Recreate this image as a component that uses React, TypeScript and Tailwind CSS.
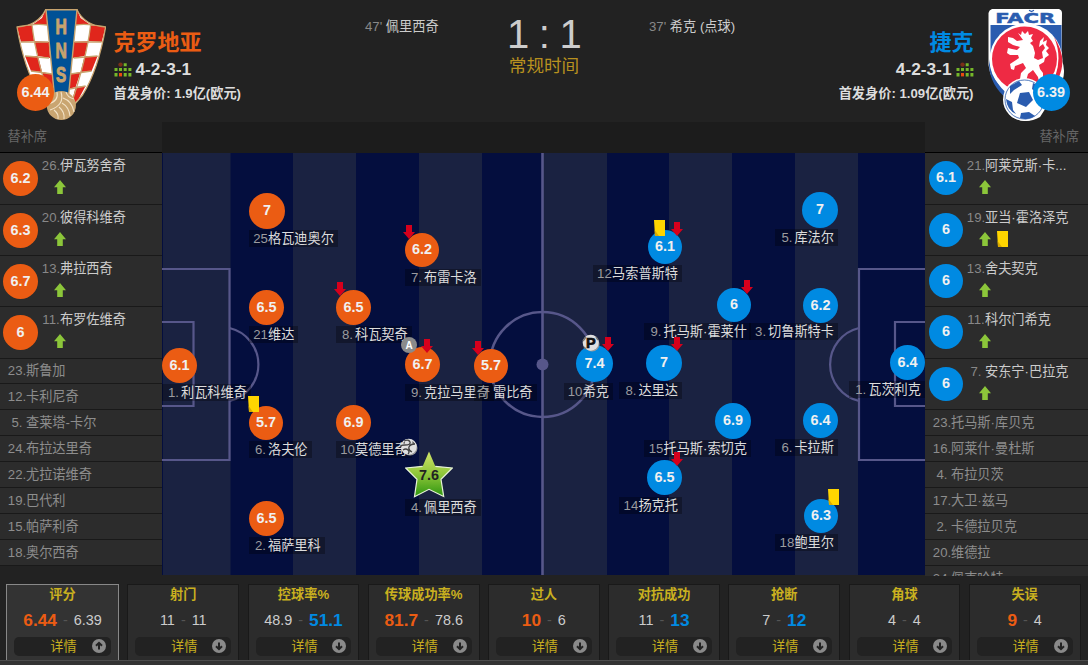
import React from 'react';
import clsx from 'clsx';

type Side = 'home' | 'away';

interface PitchPlayer {
  no: string;
  name: string;
  rating: string;
  // edge is the left side of a home marker and the right side of an away one
  edge: number;
  top: number;
  size: number;
  labelTop: number;
  side: Side;
  star?: boolean;
}

interface Sub {
  no: string;
  name: string;
  rating: string;
  yellow?: boolean;
}

const homePlayers: PitchPlayer[] = [
  { no: '1.', name: '利瓦科维奇', rating: '6.1', edge: 0, top: 195, size: 35, labelTop: 231, side: 'home' },
  { no: '25', name: '格瓦迪奥尔', rating: '7', edge: 87, top: 40, size: 36, labelTop: 77, side: 'home' },
  { no: '21', name: '维达', rating: '6.5', edge: 87, top: 137, size: 35, labelTop: 173, side: 'home' },
  { no: '6.', name: '洛夫伦', rating: '5.7', edge: 87, top: 253, size: 34, labelTop: 288, side: 'home' },
  { no: '2.', name: '福萨里科', rating: '6.5', edge: 87, top: 348, size: 35, labelTop: 384, side: 'home' },
  { no: '8.', name: '科瓦契奇', rating: '6.5', edge: 174, top: 137, size: 35, labelTop: 173, side: 'home' },
  { no: '10', name: '莫德里奇', rating: '6.9', edge: 174, top: 252, size: 35, labelTop: 288, side: 'home' },
  { no: '7.', name: '布雷卡洛', rating: '6.2', edge: 243, top: 80, size: 34, labelTop: 116, side: 'home' },
  { no: '9.', name: '克拉马里奇', rating: '6.7', edge: 243, top: 194, size: 35, labelTop: 231, side: 'home' },
  { no: '4.', name: '佩里西奇', rating: '7.6', edge: 243, top: 298, size: 48, labelTop: 346, side: 'home', star: true },
  { no: '7', name: '雷比奇', rating: '5.7', edge: 312, top: 196, size: 34, labelTop: 231, side: 'home' },
];

const awayPlayers: PitchPlayer[] = [
  { no: '12.', name: '马索普斯特', rating: '6.1', edge: 520, top: 77, size: 34, labelTop: 112, side: 'away' },
  { no: '10', name: '希克', rating: '7.4', edge: 451, top: 192, size: 37, labelTop: 230, side: 'away' },
  { no: '8.', name: '达里达', rating: '7', edge: 520, top: 192, size: 36, labelTop: 229, side: 'away' },
  { no: '14', name: '扬克托', rating: '6.5', edge: 520, top: 307, size: 35, labelTop: 344, side: 'away' },
  { no: '9.', name: '托马斯·霍莱什', rating: '6', edge: 589, top: 135, size: 34, labelTop: 170, side: 'away' },
  { no: '15', name: '托马斯·索切克', rating: '6.9', edge: 589, top: 250, size: 36, labelTop: 287, side: 'away' },
  { no: '5.', name: '库法尔', rating: '7', edge: 676, top: 39, size: 36, labelTop: 76, side: 'away' },
  { no: '3.', name: '切鲁斯特卡', rating: '6.2', edge: 676, top: 135, size: 35, labelTop: 170, side: 'away' },
  { no: '6.', name: '卡拉斯', rating: '6.4', edge: 676, top: 250, size: 35, labelTop: 286, side: 'away' },
  { no: '18', name: '鲍里尔', rating: '6.3', edge: 676, top: 346, size: 34, labelTop: 381, side: 'away' },
  { no: '1.', name: '瓦茨利克', rating: '6.4', edge: 763, top: 192, size: 35, labelTop: 228, side: 'away' },
];

const subsOut = [[241, 72], [172, 129], [259, 186], [310, 188], [509, 69], [440, 184], [509, 184], [509, 299], [579, 127]];
const yellowCards = [[86, 243], [492, 67], [666, 336]];

const homeSubs: Sub[] = [
  { no: '26.', name: '伊瓦努舍奇', rating: '6.2' },
  { no: '20.', name: '彼得科维奇', rating: '6.3' },
  { no: '13.', name: '弗拉西奇', rating: '6.7' },
  { no: '11.', name: '布罗佐维奇', rating: '6' },
];
const homeBench = [['23.', '斯鲁加'], ['12.', '卡利尼奇'], ['5.', '查莱塔-卡尔'], ['24.', '布拉达里奇'], ['22.', '尤拉诺维奇'], ['19.', '巴代利'], ['15.', '帕萨利奇'], ['18.', '奥尔西奇']];

const awaySubs: Sub[] = [
  { no: '21.', name: '阿莱克斯·卡...', rating: '6.1' },
  { no: '19.', name: '亚当·霍洛泽克', rating: '6', yellow: true },
  { no: '13.', name: '舍夫契克', rating: '6' },
  { no: '11.', name: '科尔门希克', rating: '6' },
  { no: '7.', name: '安东宁·巴拉克', rating: '6' },
];
const awayBench = [['23.', '托马斯·库贝克'], ['16.', '阿莱什·曼杜斯'], ['4.', '布拉贝茨'], ['17.', '大卫·兹马'], ['2.', '卡德拉贝克'], ['20.', '维德拉'], ['24.', '佩克哈特']];

const stats = [
  { title: '评分', home: '6.44', away: '6.39', lead: 'home' },
  { title: '射门', home: '11', away: '11', lead: '' },
  { title: '控球率%', home: '48.9', away: '51.1', lead: 'away' },
  { title: '传球成功率%', home: '81.7', away: '78.6', lead: 'home' },
  { title: '过人', home: '10', away: '6', lead: 'home' },
  { title: '对抗成功', home: '11', away: '13', lead: 'away' },
  { title: '抢断', home: '7', away: '12', lead: 'away' },
  { title: '角球', home: '4', away: '4', lead: '' },
  { title: '失误', home: '9', away: '4', lead: 'home' },
];

function Arrow({ down, className }: { down?: boolean; className?: string }) {
  return (
    <svg width="12" height="14" viewBox="0 0 12 14" className={className}>
      {down
        ? <path d="M3 0h6v7h3L6 14 0 7h3z" fill="#d6001c" />
        : <path d="M3.2 14h5.6V7.2H12L6 0 0 7.2h3.2z" fill="#8cc63a" />}
    </svg>
  );
}

function YellowCard() {
  return (
    <svg width="12" height="16" viewBox="0 0 12 16">
      <path d="M0 0h11v16H1z" fill="#ffd500" />
      <path d="M.6 10 5 16H1z" fill="#d9a900" />
    </svg>
  );
}

function Ball({ letter }: { letter?: string }) {
  return (
    <svg width="18" height="18" viewBox="0 0 18 18">
      <circle cx="10" cy="10" r="7.5" fill="#999" />
      <circle cx="8.7" cy="8.7" r="8" fill="#e0e0e0" />
      {letter ? (
        <>
          <path d="M1 7 4 3M2 13l2 2M14 3l2 3" stroke="#777" strokeWidth="1.4" fill="none" />
          <text x="8.8" y="13.8" textAnchor="middle" fontSize="14.5" fontWeight="bold" fontFamily="Liberation Sans, sans-serif" fill="#111" stroke="#111" strokeWidth=".7">{letter}</text>
        </>
      ) : (
        <>
          <path d="M4 3Q9 1 10 4T5 7 1.5 9M15 6Q10 6 9 9t3 5M3 12q3-2 5 0t0 4" stroke="#444" strokeWidth="1.3" fill="none" />
          <path d="M12.5 3 15 6l-2.5-.5zM3 5 5 3.5 4.5 6z" fill="#444" />
        </>
      )}
    </svg>
  );
}

function CroatiaCrest() {
  const half = (
    <>
      <path d="M30 0Q22 17 1 18Q8 60 24 86Q34 100 45 100V0z" fill="#fff" />
      <path d="M30 0 32 16 16 16 26 9z" fill="#e0261c" />
      <path d="M1 18 16 16 18 32 5 33z" fill="#e0261c" />
      <path d="M18 32 33 33 34 49 22 47z" fill="#e0261c" />
      <path d="M9 47 22 47 26 63 15 62z" fill="#e0261c" />
      <path d="M26 63 36 65 38 80 31 78z" fill="#e0261c" />
      <path d="M21 77 31 78 36 98 28 90z" fill="#e0261c" />
      <path d="M16 16Q20 50 36 97M1 18Q20 14 31 16M5 33 32 33M9 47 33 49M15 62 36 65M21 77 37 80M30 0Q22 17 1 18Q8 60 24 86L36 100" fill="none" stroke="#c7a36e" strokeWidth="1.3" />
    </>
  );
  return (
    <svg width="90" height="113" viewBox="0 0 90 113">
      <g>{half}</g>
      <g transform="translate(90.6 0) scale(-1 1)">{half}</g>
      <path d="M30 .7h31L52 92H39z" fill="#005196" stroke="#c7a36e" strokeWidth="1.4" />
      <g fill="#c7a36e" stroke="#c7a36e" strokeWidth="1" fontFamily="Liberation Sans, sans-serif" fontWeight="bold" fontSize="22.5" textAnchor="middle">
        <text transform="translate(45.2 25.3) scale(.7 1)">H</text>
        <text transform="translate(45.2 48.7) scale(.7 1)">N</text>
        <text transform="translate(45.2 72.5) scale(.68 1)">S</text>
      </g>
      <circle cx="45.3" cy="96.5" r="14.6" fill="#c9a571" />
      <path d="M45 83Q49 96 34 101M41 83Q43 92 32 95M36 87Q38 90 32 91M47 89Q56 92 58 103M46 94Q53 98 54 107M43 98Q49 103 48 110M38 101Q43 105 42 110M50 83Q51 88 58 90" stroke="#f3e3c8" strokeWidth="1.1" fill="none" />
    </svg>
  );
}

function CzechCrest() {
  return (
    <svg width="78" height="113" viewBox="0 0 78 113">
      <path d="M4 0h67q3 1 3 4l-.5 46Q80 66 70 80L52 108Q38 116 24 108 14 98 18 87 2 72 .5 56V4Q1 1 4 0z" fill="#fff" />
      <path d="M2.5 16h71v40H2.5z" fill="#2a5caf" />
      <path d="M2 50Q3 72 21 86l-2 4Q2 76 1 56z" fill="#2a5caf" />
      <text x="37.2" y="13.6" textAnchor="middle" textLength="60" lengthAdjust="spacingAndGlyphs" fontSize="14.5" fontWeight="bold" fontFamily="DejaVu Sans, sans-serif" fill="#2a5caf" stroke="#2a5caf" strokeWidth=".5">FACR</text>
      <path d="M41 1.2 43.5 2.6 46 1.2" stroke="#2a5caf" strokeWidth="1.1" fill="none" />
      <circle cx="38" cy="51" r="36.5" fill="#fff" />
      <path d="M66 28Q86 58 58 86 78 56 66 28z" fill="#e8243c" />
      <circle cx="36.5" cy="50" r="32.5" fill="#ee2a44" />
      <path d="M30 24l3 2 1-4 3 3 3-3 1 4 4-1-2 4 2 3-3 2 3 3 2 7-1 5 4 2 5-2-1-6 3-4-2-4-4 3 1-6 4-4-1 5 4-2-1 5 3 3-3 3 3 4-4 3-1 4-5 3 1 4 3 4v6l3 3h-7l-1-5-5-7-5 4-2 7-3 3-7-1 4-4 1-6 5-5-3-5-8 3-1 4-3-1-1-5 9-6-1-3-8 0-3-2 1-5 4 1 5 1 3-3-7-2-5-3 0-5 5 1 4 3 6-1z" fill="#fff" />
      <circle cx="36.5" cy="90.5" r="21.5" fill="#fff" />
      <circle cx="36.5" cy="90.5" r="19.5" fill="#fff" stroke="#2a5caf" strokeWidth=".8" />
      <g fill="#2a5caf">
        <path d="M32 84l9-1 4 8-7 7-9-4z" />
        <path d="M22 77l9-5 3 4-8 5-4 4z" />
        <path d="M18 90l6 3 1 8 3 4q-9-4-10-15z" />
        <path d="M33 104l8-1 6 4q-7 5-15 2z" />
        <path d="M45 74q7 3 10 9l-5 2-6-5z" />
      </g>
    </svg>
  );
}

function FormationIcon() {
  return (
    <svg width="18" height="15" viewBox="0 0 18 15">
      <path d="M.5 6h3v3h-3zM5 6h3v3H5zM9.7 6h3v3h-3zM14.4 6h3v3h-3zM.5 11h3v3.4h-3zM9.7 11h3v3.4h-3zM14.4 11h3v3.4h-3zM9.7 1.2h3v3h-3z" fill="#76b82a" />
      <path d="M5 11h3v3.4H5z" fill="#eb4a10" />
      <circle cx="6.5" cy="2.6" r="2.2" fill="#7a2f18" />
    </svg>
  );
}

function Rating({ value, side, className }: { value: string; side: Side; className?: string }) {
  return (
    <div className={clsx('flex shrink-0 items-center justify-center rounded-full text-[14.4px] font-bold text-[#f0f0f0]', side === 'home' ? 'bg-[#eb5c13]' : 'bg-[#008ae2]', className)}>
      {value}
    </div>
  );
}

function Marker({ p }: { p: PitchPlayer }) {
  const home = p.side === 'home';
  return (
    <>
      {p.star ? (
        <div className="absolute h-[47px] w-12" style={{ left: p.edge, top: p.top }}>
          <svg width="48" height="47" viewBox="0 0 48 47">
            <defs>
              <linearGradient id="star" x1="0" y1="0" x2="0" y2="1">
                <stop offset="0" stopColor="#d3e56a" />
                <stop offset=".5" stopColor="#8fc63a" />
                <stop offset="1" stopColor="#2c950f" />
              </linearGradient>
            </defs>
            <path d="M24 .5 30.3 15.3 47.3 17 36 28.3 38.7 45.5 24 38.3 9.5 45.7 12 28.3.7 17 17.7 15.3z" fill="url(#star)" />
            <path d="M17.7 15.3.7 17 12 28.3 9.5 45.7 24 38.3 38.7 45.5 36 28.3 47.3 17 30.3 15.3" fill="none" stroke="#e8f3d8" strokeWidth="1.2" />
          </svg>
          <span className="absolute inset-x-0 top-[14px] text-center text-[14.4px] font-bold leading-5 text-[#222]">{p.rating}</span>
        </div>
      ) : (
        <div
          className={clsx('absolute flex items-center justify-center rounded-full text-[14.4px] font-bold text-[#f0f0f0]', home ? 'bg-[#eb5c13]' : 'bg-[#008ae2]')}
          style={{ left: home ? p.edge : p.edge - p.size, top: p.top, width: p.size, height: p.size }}
        >
          {p.rating}
        </div>
      )}
      <div
        className="absolute flex h-[17px] items-center whitespace-nowrap bg-black/30 pr-[4px] pl-[4px] text-[13.2px] leading-[17px]"
        style={home ? { left: p.edge, top: p.labelTop } : { right: 763 - p.edge, top: p.labelTop }}
      >
        <span className={clsx('flex w-[15px] text-[#9b9b9f]', p.no.length < 3 && 'justify-center')}>{p.no}</span>
        <span className="text-[#dcdcdc]">{p.name}</span>
      </div>
    </>
  );
}

function Pitch() {
  return (
    <div className="relative h-[422px] overflow-hidden bg-[#040e3e]">
      <svg width="763" height="422" viewBox="0 0 763 422" className="block">
        <g fill="#1a2241">
          <rect x="1" width="67.5" height="422" />
          <rect x="131" width="63" height="422" />
          <rect x="257" width="63" height="422" />
          <rect x="381" width="64" height="422" />
          <rect x="507" width="63" height="422" />
          <rect x="633" width="63" height="422" />
        </g>
        <g fill="none" stroke="#57578a" strokeWidth="2.2">
          <path d="M380.5 0V422" strokeWidth="2.6" />
          <circle cx="380.5" cy="211.5" r="52.5" strokeWidth="2.6" />
          <path d="M0 116H67.5V307H0M0 169H31.5V253H0" />
          <path d="M763 116H697V307H763M763 169H733V253H763" />
          <path d="M67.5 175A37.5 37.5 0 0 1 67.5 248M697 175A37.5 37.5 0 0 0 697 248" />
        </g>
        <circle cx="380.5" cy="211.5" r="6" fill="#57578a" />
      </svg>
      {homePlayers.map(p => <Marker key={p.name} p={p} />)}
      {awayPlayers.map(p => <Marker key={p.name} p={p} />)}
      {subsOut.map(([x, y]) => (
        <div key={`${x}-${y}`} className="absolute" style={{ left: x, top: y }}><Arrow down className="block" /></div>
      ))}
      {yellowCards.map(([x, y]) => (
        <div key={x} className="absolute" style={{ left: x, top: y }}><YellowCard /></div>
      ))}
      <div className="absolute top-[184px] left-[239px] flex size-4 items-center justify-center rounded-full bg-[#8b8b8b] text-[10px] font-bold text-white">A</div>
      <div className="absolute top-[285px] left-[238px]"><Ball /></div>
      <div className="absolute top-[181px] left-[420px]"><Ball letter="P" /></div>
    </div>
  );
}

function Bench({ side, subs, bench }: { side: Side; subs: Sub[]; bench: string[][] }) {
  const home = side === 'home';
  return (
    <aside className={clsx('flex h-[454px] flex-col overflow-hidden text-[13.2px]', home ? 'w-[162px]' : 'w-[163px]')}>
      <div className={clsx('h-[31px] shrink-0 border-b border-black pl-[7.5px] pt-[5px] leading-5 text-[#666]', !home && 'pr-[9px] text-right')}>替补席</div>
      {subs.map((s, i) => (
        <div
          key={s.name}
          className={clsx('flex shrink-0 border-b border-[#191919] bg-[#2c2c2c] pt-2', home ? 'pl-[3px]' : 'pl-1', i === 0 || i === 3 ? 'h-[52px]' : 'h-[51px]')}
        >
          <Rating value={s.rating} side={side} className={home ? 'size-[35px]' : 'size-[34px]'} />
          <div className="-mt-[5px] ml-1">
            <div className="flex whitespace-nowrap leading-5">
              <span className="flex w-[18px] justify-center text-[#888]">{s.no}</span>
              <span className="text-[#ccc]">{s.name}</span>
            </div>
            <div className="flex h-5 items-center gap-[6px] pt-px pl-3">
              <Arrow />
              {s.yellow && <YellowCard />}
            </div>
          </div>
        </div>
      ))}
      {bench.map(([no, name], i) => (
        <div key={name} className={clsx('flex shrink-0 border-b border-[#191919] bg-[#2c2c2c] pl-2 text-[#8d8d8d]', home && i === 0 ? 'h-[25px] leading-[24px]' : 'h-[26px] leading-[26px]')}>
          <span className="flex w-[18px] justify-center">{no}</span>
          <span>{name}</span>
        </div>
      ))}
    </aside>
  );
}

function StatTab({ s, active }: { s: (typeof stats)[number]; active: boolean }) {
  return (
    <div
      className={clsx(
        'flex flex-col border px-[7px] text-center',
        active ? 'h-[77px] w-[113px] border-b-0 border-[#888] bg-[#333]' : 'h-[76px] flex-1 border-b-0 border-[#191919] bg-[#2c2c2c]'
      )}
    >
      <div className="h-5 text-[13.2px] font-bold leading-[19px] whitespace-nowrap text-[#c9b01f]">{s.title}</div>
      <div className="flex h-8 items-center justify-center gap-[6px] text-[14.4px] text-[#ccc]">
        <span className={clsx(s.lead === 'home' && 'text-[17.3px] font-bold text-[#eb5c13]')}>{s.home}</span>
        <span className="text-[#555]">-</span>
        <span className={clsx(s.lead === 'away' && 'text-[17.3px] font-bold text-[#008ae2]')}>{s.away}</span>
      </div>
      <div className="relative h-[19px] rounded-[5px] bg-[#222] pl-[2px] text-[13.2px] leading-[19px] text-[#c9b01f]">
        详情
        <svg width="14" height="14" viewBox="0 0 14 14" className="absolute top-[2px] right-[5px]">
          <circle cx="7" cy="7" r="7" fill="#8a8a8a" />
          <path d={active ? 'M7 10.5V5M4 6.7 7 3.8 10 6.7' : 'M7 3.5V9M4 7.3 7 10.2 10 7.3'} fill="none" stroke="#222" strokeWidth="2" />
        </svg>
      </div>
    </div>
  );
}

export default function App() {
  return (
    <div className="flex h-[665px] w-[1088px] flex-col overflow-hidden bg-[#222] font-['Liberation_Sans','Noto_Sans_CJK_SC',sans-serif] text-[13.2px] text-[#ddd]">
      <header className="flex h-[122px] shrink-0">
        <div className="flex w-[365px]">
          <div className="relative w-[113.5px] pt-[9px] pl-4">
            <CroatiaCrest />
            <Rating value="6.44" side="home" className="absolute top-[74px] left-[17px] size-[37px]" />
          </div>
          <div className="pt-[27px] whitespace-nowrap">
            <div className="text-[22px] font-bold leading-[32px] text-[#eb5c13]">克罗地亚</div>
            <div className="flex h-[21px] items-center gap-1 text-[17.3px] font-bold"><FormationIcon />4-2-3-1</div>
            <div className="font-bold leading-[27px]">首发身价: 1.9亿(欧元)</div>
          </div>
        </div>
        <div className="flex w-[420px] pt-[17px]">
          <div className="w-[126px] shrink-0 leading-5"><span className="text-[#888]">47'</span> <span className="text-[#ccc]">佩里西奇</span></div>
          <div className="-mt-[5px] w-[106px] shrink-0 text-center">
            <div className="text-[40px] leading-[44px] tracking-[-0.8px] text-[#ccc]">1 : 1</div>
            <div className="text-[17.6px] leading-5 text-[#b8911f]">常规时间</div>
          </div>
          <div className="ml-[52px] leading-5 whitespace-nowrap"><span className="text-[#888]">37'</span> <span className="text-[#ccc]">希克 (点球)</span></div>
        </div>
        <div className="flex flex-1 justify-end">
          <div className="flex flex-col items-end pt-[27px] whitespace-nowrap">
            <div className="text-[22px] font-bold leading-[32px] text-[#008ae2]">捷克</div>
            <div className="flex h-[21px] items-center gap-1 text-[17.3px] font-bold">4-2-3-1<FormationIcon /></div>
            <div className="font-bold leading-[27px]">首发身价: 1.09亿(欧元)</div>
          </div>
          <div className="relative w-[114.5px] pt-[9px] pl-[14px]">
            <CzechCrest />
            <Rating value="6.39" side="away" className="absolute top-[74px] left-[59px] size-[37px]" />
          </div>
        </div>
      </header>

      <main className="flex h-[454px] shrink-0">
        <Bench side="home" subs={homeSubs} bench={homeBench} />
        <div className="w-[763px] shrink-0">
          <div className="h-[31px] bg-[#1c1c1c]" />
          <Pitch />
        </div>
        <Bench side="away" subs={awaySubs} bench={awayBench} />
      </main>

      <div className="flex h-[84px] shrink-0 gap-[8.4px] pt-2 pr-[7.5px] pl-[6px]">
        {stats.map((s, i) => <StatTab key={s.title} s={s} active={i === 0} />)}
      </div>
      <div className="-mt-[84px] h-[5px] translate-y-[84px] border-t border-[#4c4c4c] bg-[#333]" />
    </div>
  );
}
